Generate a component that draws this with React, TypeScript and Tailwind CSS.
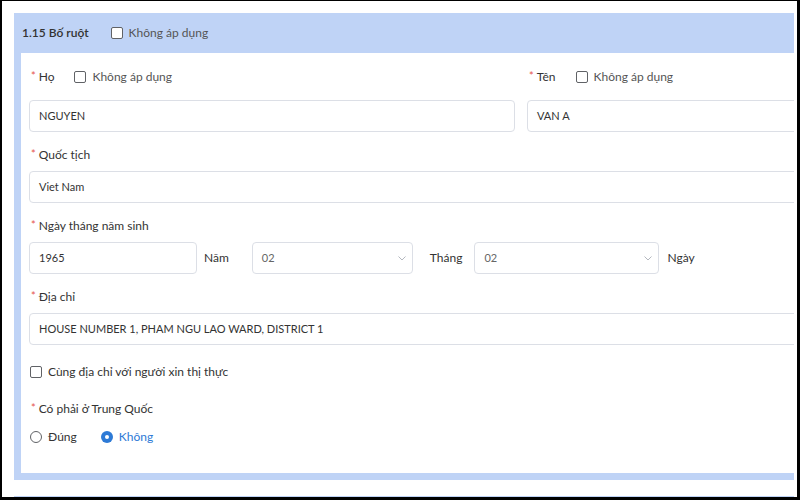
import React from 'react';

const Checkbox: React.FC = () => (
  <span className="inline-block w-[12px] h-[12px] border border-[#606266] rounded-[2px] bg-white shrink-0" />
);

const Radio: React.FC<{ checked?: boolean }> = ({ checked }) =>
  checked ? (
    <span className="flex items-center justify-center w-[12px] h-[12px] rounded-full bg-[#2d7ad6] shrink-0">
      <span className="w-[4px] h-[4px] rounded-full bg-white" />
    </span>
  ) : (
    <span className="inline-block w-[12px] h-[12px] rounded-full border border-[#606266] bg-white shrink-0" />
  );

const Label: React.FC<{ text: string; children?: React.ReactNode }> = ({ text, children }) => (
  <div className="flex items-center h-[20px] pl-[2px] text-[12px] text-[#333]">
    <span className="text-[#e5534b] text-[11px] mr-[3px] -mt-[1px]">*</span>
    <span>{text}</span>
    {children}
  </div>
);

const NotApplicable: React.FC = () => (
  <div className="flex items-center ml-[20px] text-[#555]">
    <Checkbox />
    <span className="ml-[6px]">Không áp dụng</span>
  </div>
);

const Input: React.FC<{ value: string; className?: string }> = ({ value, className = '' }) => (
  <div
    className={`flex items-center h-[32px] border border-[#dcdfe6] rounded-[4px] bg-white px-[9px] text-[11px] text-[#333] ${className}`}
  >
    {value}
  </div>
);

const Select: React.FC<{ value: string; className?: string }> = ({ value, className = '' }) => (
  <div
    className={`flex items-center justify-between h-[32px] border border-[#dcdfe6] rounded-[4px] bg-white pl-[9px] pr-[5px] text-[11px] text-[#666] ${className}`}
  >
    <span>{value}</span>
    <svg width="10" height="10" viewBox="0 0 10 10" fill="none">
      <path d="M1.5 3.5 L5 7 L8.5 3.5" stroke="#b4b8bf" strokeWidth="1" />
    </svg>
  </div>
);

export default function App() {
  return (
    <div
      className="w-[800px] h-[500px] overflow-hidden bg-white border-black border-l-2 border-t border-r-[3px] border-b-[3px]"
      style={{ fontFamily: 'Lato, "Noto Sans", sans-serif' }}
    >
      <div className="pl-[12px] pt-[12px]">
        <div className="w-[780px] overflow-hidden">
          {/* Tiêu đề */}
          <div className="flex items-center h-[40px] bg-[#bfd3f6] px-[8px]">
            <span className="text-[12px] font-semibold text-[#333]">1.15 Bố ruột</span>
            <div className="flex items-center ml-[22px] text-[12px] text-[#555]">
              <Checkbox />
              <span className="ml-[6px]">Không áp dụng</span>
            </div>
          </div>

          {/* Nội dung */}
          <div className="h-[427px] bg-white border-l-[7px] border-b-[7px] border-[#bfd3f6] overflow-hidden">
            <div className="w-[1000px] pl-[8px] pt-[14px]">
              <div className="grid grid-cols-[486px_486px] gap-x-[12px]">
                <div>
                  <Label text="Họ">
                    <NotApplicable />
                  </Label>
                  <Input value="NGUYEN" className="mt-[13px]" />
                </div>
                <div>
                  <Label text="Tên">
                    <NotApplicable />
                  </Label>
                  <Input value="VAN A" className="mt-[13px]" />
                </div>
              </div>

              <div className="mt-[13px]">
                <Label text="Quốc tịch" />
                <Input value="Viet Nam" className="mt-[6px]" />
              </div>

              <div className="mt-[13px]">
                <Label text="Ngày tháng năm sinh" />
                <div className="flex items-center mt-[6px] text-[12px] text-[#333]">
                  <Input value="1965" className="w-[168px]" />
                  <span className="ml-[7px] mr-[23px]">Năm</span>
                  <Select value="02" className="w-[161px]" />
                  <span className="ml-[17px] mr-[12px]">Tháng</span>
                  <Select value="02" className="w-[185px]" />
                  <span className="ml-[8px]">Ngày</span>
                </div>
              </div>

              <div className="mt-[13px]">
                <Label text="Địa chỉ" />
                <Input value="HOUSE NUMBER 1, PHAM NGU LAO WARD, DISTRICT 1" className="mt-[6px]" />
              </div>

              <div className="flex items-center h-[20px] mt-[17px] pl-[1px] text-[12px] text-[#333]">
                <Checkbox />
                <span className="ml-[6px]">Cùng địa chỉ với người xin thị thực</span>
              </div>

              <div className="mt-[17px]">
                <Label text="Có phải ở Trung Quốc" />
              </div>

              <div className="flex items-center h-[20px] mt-[8px] pl-[1px] text-[12px]">
                <Radio />
                <span className="ml-[6px] text-[#333]">Đúng</span>
                <span className="ml-[24px]">
                  <Radio checked />
                </span>
                <span className="ml-[6px] text-[#2d7ad6]">Không</span>
              </div>
            </div>
          </div>

          {/* Khối tiếp theo */}
          <div className="mt-[16px] h-[40px] bg-[#bfd3f6]" />
        </div>
      </div>
    </div>
  );
}
